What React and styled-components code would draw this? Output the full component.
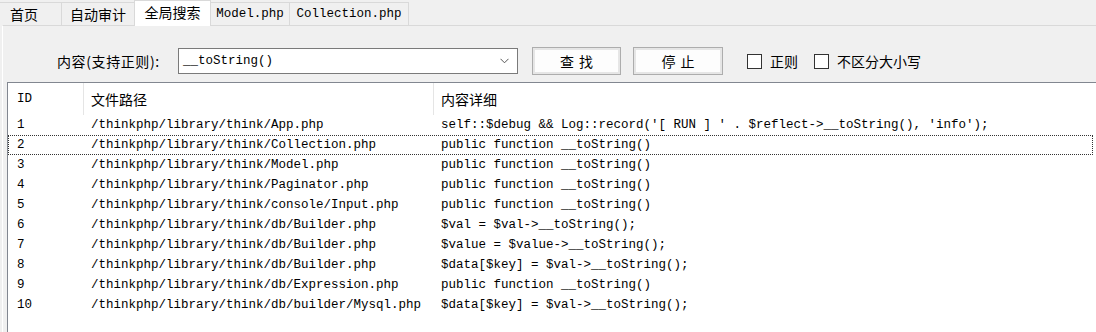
import React from "react";
import styled, { createGlobalStyle } from "styled-components";

const GlobalStyle = createGlobalStyle`
  html, body {
    margin: 0;
    padding: 0;
    background: #f0f0f0;
  }
  body {
    width: 1096px;
    height: 332px;
    overflow: hidden;
  }
`;

const CJK = `"Noto Sans CJK SC", "Noto Sans", sans-serif`;
const MONO = `"Liberation Mono", "DejaVu Sans Mono", "Noto Sans CJK SC", monospace`;

const tabs = [
  { label: "首页", width: 62, mono: false, left: true },
  { label: "自动审计", width: 74, mono: false },
  { label: "全局搜索", width: 77, mono: false, active: true },
  { label: "Model.php", width: 80, mono: true },
  { label: "Collection.php", width: 120, mono: true },
];

const results = [
  ["1", "/thinkphp/library/think/App.php", "self::$debug && Log::record('[ RUN ] ' . $reflect->__toString(), 'info');"],
  ["2", "/thinkphp/library/think/Collection.php", "public function __toString()"],
  ["3", "/thinkphp/library/think/Model.php", "public function __toString()"],
  ["4", "/thinkphp/library/think/Paginator.php", "public function __toString()"],
  ["5", "/thinkphp/library/think/console/Input.php", "public function __toString()"],
  ["6", "/thinkphp/library/think/db/Builder.php", "$val = $val->__toString();"],
  ["7", "/thinkphp/library/think/db/Builder.php", "$value = $value->__toString();"],
  ["8", "/thinkphp/library/think/db/Builder.php", "$data[$key] = $val->__toString();"],
  ["9", "/thinkphp/library/think/db/Expression.php", "public function __toString()"],
  ["10", "/thinkphp/library/think/db/builder/Mysql.php", "$data[$key] = $val->__toString();"],
];

const Window = styled.div`
  width: 1096px;
  height: 332px;
  display: flex;
  flex-direction: column;
  background: #f0f0f0;
`;

const TabStrip = styled.div`
  display: flex;
  align-items: flex-end;
  height: 25px;
  flex-shrink: 0;
  position: relative;
  z-index: 1;
`;

const Tab = styled.div`
  box-sizing: border-box;
  width: ${(p) => p.$width}px;
  height: ${(p) => (p.$active ? 26 : 23)}px;
  margin-bottom: ${(p) => (p.$active ? -1 : 0)}px;
  display: flex;
  align-items: center;
  justify-content: ${(p) => (p.$left ? "flex-start" : "center")};
  padding-left: ${(p) => (p.$left ? 10 : 0)}px;
  padding-bottom: ${(p) => (p.$active ? 3 : 0)}px;
  background: ${(p) => (p.$active ? "#ffffff" : "#f0f0f0")};
  border: 1px solid #d9d9d9;
  border-bottom: none;
  border-left-width: ${(p) => (p.$left ? 0 : 1)}px;
  margin-right: -1px;
  font-family: ${(p) => (p.$mono ? MONO : CJK)};
  font-size: ${(p) => (p.$mono ? "12.5px" : "14px")};
  color: #000;
  white-space: nowrap;
`;

const Page = styled.div`
  flex: 1;
  display: flex;
  flex-direction: column;
  border-top: 1px solid #d9d9d9;
  border-left: 1px solid #ffffff;
  margin-left: 2px;
  min-height: 0;
`;

const SearchRow = styled.div`
  display: flex;
  align-items: center;
  height: 28px;
  margin-top: 21px;
  padding-left: 54px;
  flex-shrink: 0;
`;

const Label = styled.span`
  width: 121px;
  font-family: ${CJK};
  font-size: 14px;
  letter-spacing: 0.6px;
  color: #000;
  white-space: nowrap;
`;

const Combo = styled.div`
  box-sizing: border-box;
  width: 340px;
  height: 26px;
  background: #fff;
  border: 1px solid #7a7a7a;
  display: flex;
  align-items: center;
  justify-content: space-between;
  padding: 0 8px 0 4px;
  font-family: ${MONO};
  font-size: 12.5px;
  color: #000;
`;

const Button = styled.div`
  box-sizing: border-box;
  width: ${(p) => p.$width}px;
  height: 28px;
  margin-left: ${(p) => p.$gap}px;
  border: 1px solid #adadad;
  box-shadow: inset 0 0 0 2px #e6e6e6;
  background: #fdfdfd;
  display: flex;
  align-items: center;
  justify-content: center;
  font-family: ${CJK};
  font-size: 14px;
  letter-spacing: 5px;
  padding-left: 5px;
  color: #000;
`;

const Check = styled.label`
  display: flex;
  align-items: center;
  gap: 8px;
  margin-left: ${(p) => p.$gap}px;
  font-family: ${CJK};
  font-size: 14px;
  color: #000;
  white-space: nowrap;
`;

const Box = styled.span`
  box-sizing: border-box;
  width: 15px;
  height: 15px;
  border: 1px solid #333;
  background: #fff;
`;

const List = styled.div`
  flex: 1;
  margin-top: 7px;
  margin-left: 4px;
  background: #fff;
  border-top: 1px solid #828790;
  border-left: 1px solid #828790;
  min-height: 0;
`;

const Grid = styled.div`
  display: grid;
  grid-template-columns: 76px 350px 1fr;
  height: ${(p) => p.$height}px;
  align-items: stretch;
  margin-right: ${(p) => (p.$focus ? 3 : 0)}px;
  outline: ${(p) => (p.$focus ? "1px dotted #333" : "none")};
  outline-offset: -1px;
`;

const HeadCell = styled.div`
  display: flex;
  align-items: center;
  padding-left: ${(p) => p.$pad}px;
  border-right: ${(p) => (p.$sep ? "1px solid #e5e5e5" : "none")};
  font-family: ${(p) => (p.$mono ? MONO : CJK)};
  font-size: ${(p) => (p.$mono ? "12.5px" : "14px")};
  color: #000;
`;

const Cell = styled.div`
  display: flex;
  align-items: center;
  padding-left: ${(p) => p.$pad}px;
  font-family: ${MONO};
  font-size: 12.5px;
  color: #000;
  white-space: pre;
  overflow: hidden;
`;

const Chevron = () => (
  <svg width="9" height="6" viewBox="0 0 9 6">
    <path d="M0.5 0.8 L4.5 4.8 L8.5 0.8" fill="none" stroke="#555" strokeWidth="1" />
  </svg>
);

const App = () => {
  return (
    <>
      <GlobalStyle />
      <Window>
        <TabStrip>
          {tabs.map((t) => (
            <Tab key={t.label} $width={t.width} $mono={t.mono} $active={t.active} $left={t.left}>
              {t.label}
            </Tab>
          ))}
        </TabStrip>

        <Page>
          <SearchRow>
            <Label>内容(支持正则):</Label>
            <Combo>
              <span>__toString()</span>
              <Chevron />
            </Combo>
            <Button $width={89} $gap={14}>查找</Button>
            <Button $width={90} $gap={12}>停止</Button>
            <Check $gap={24}>
              <Box />
              正则
            </Check>
            <Check $gap={16}>
              <Box />
              不区分大小写
            </Check>
          </SearchRow>

          <List>
            <Grid $height={32}>
              <HeadCell $pad={9} $sep $mono>ID</HeadCell>
              <HeadCell $pad={7} $sep>文件路径</HeadCell>
              <HeadCell $pad={7}>内容详细</HeadCell>
            </Grid>
            {results.map(([id, path, detail]) => (
              <Grid key={id} $height={20} $focus={id === "2"}>
                <Cell $pad={9}>{id}</Cell>
                <Cell $pad={7}>{path}</Cell>
                <Cell $pad={7}>{detail}</Cell>
              </Grid>
            ))}
          </List>
        </Page>
      </Window>
    </>
  );
};

export default App;
